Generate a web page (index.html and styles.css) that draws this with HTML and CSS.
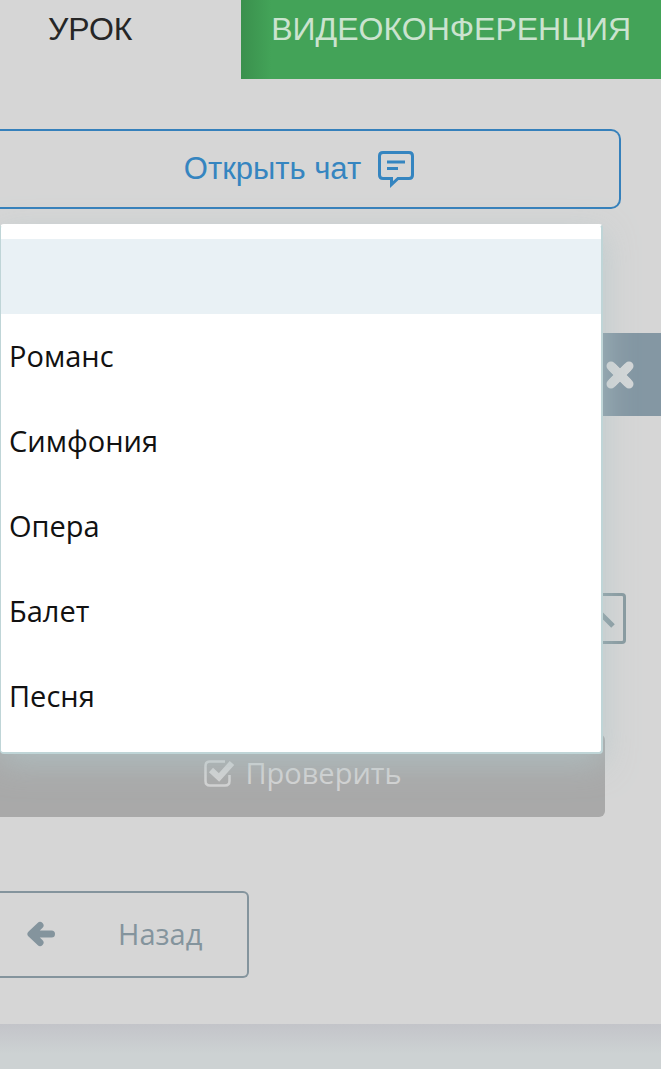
FILE: index.html
```html
<!DOCTYPE html>
<html lang="ru">
<head>
    <meta charset="UTF-8">
    <meta name="viewport" content="width=device-width, initial-scale=1.0">
    <title>Урок</title>
    <link rel="stylesheet" href="styles.css">
</head>
<body>
    <main class="page">
        <nav class="tabs">
            <a class="tab active" href="#lesson">УРОК</a>
            <a class="tab video" href="#video">ВИДЕОКОНФЕРЕНЦИЯ</a>
        </nav>

        <button class="chat" type="button">
            Открыть чат
            <svg width="38" height="38" viewBox="0 0 38 38" fill="none" stroke="currentColor" stroke-width="3">
                <path d="M6 2.500h26q3.500 0 3.500 3.500v19q0 3.500-3.500 3.500H21l-6.500 6v-6H6q-3.500 0-3.500-3.500V6q0-3.500 3.500-3.500z"/>
                <path d="M10 12h18M10 18.500h11"/>
            </svg>
        </button>

        <section class="task">
            <div class="bar">
                <button class="close" type="button" aria-label="Закрыть">
                    <svg width="32" height="32" viewBox="0 0 32 32" stroke="currentColor" stroke-width="9" stroke-linecap="square">
                        <path d="M8 8l16 16M24 8L8 24" stroke-linecap="butt"/>
                        <path d="M7 7l18 18M25 7L7 25" stroke-linecap="round"/>
                    </svg>
                </button>
            </div>

            <div class="field">
                <select class="answer" id="answer" aria-label="Ответ">
                    <option selected></option>
                    <option>Романс</option>
                    <option>Симфония</option>
                    <option>Опера</option>
                    <option>Балет</option>
                    <option>Песня</option>
                </select>
                <svg class="arrow" width="30" height="22" viewBox="0 0 30 22" fill="none" stroke="currentColor" stroke-width="5">
                    <path d="M2 18L15 5l13 13"/>
                </svg>
            </div>

            <button class="check" type="button">
                <svg width="32" height="30" viewBox="0 0 32 30" fill="none" stroke="currentColor">
                    <path d="M22 3.500H7Q2.500 3.500 2.500 8v15q0 4.500 4.500 4.500h15q4.500 0 4.500-4.500v-6" stroke-width="2.500"/>
                    <path d="M8 12l8 7.500L29 5" stroke-width="6"/>
                </svg>
                Проверить
            </button>

            <ul class="menu" id="menu">
                <li><button class="option selected" type="button" aria-label="Пусто"></button></li>
                <li><button class="option" type="button">Романс</button></li>
                <li><button class="option" type="button">Симфония</button></li>
                <li><button class="option" type="button">Опера</button></li>
                <li><button class="option" type="button">Балет</button></li>
                <li><button class="option" type="button">Песня</button></li>
            </ul>
        </section>

        <a class="back" href="#back">
            <svg width="30" height="26" viewBox="0 0 30 26" fill="none" stroke="currentColor" stroke-width="7" stroke-linecap="round" stroke-linejoin="round">
                <path d="M14 4.500L5 13l9 8.500M6 13h19.500"/>
            </svg>
            Назад
        </a>
    </main>
    <footer class="footer"></footer>

    <script>
        const answer = document.getElementById('answer');
        const options = document.querySelectorAll('.option');

        options.forEach((option, index) => {
            option.addEventListener('click', () => {
                answer.selectedIndex = index;
                document.getElementById('menu').hidden = true;
            });
        });
    </script>
</body>
</html>
```
FILE: styles.css
```css
* {
    box-sizing: border-box;
}
body {
    margin: 0;
    min-height: 100vh;
    display: flex;
    flex-direction: column;
    background-color: #cdd2d3;
    font-family: "Open Sans", sans-serif;
    font-size: 29px;
}
button, select {
    font: inherit;
    cursor: pointer;
}
svg {
    display: block;
    flex: none;
}
.page {
    background-color: #d6d6d6;
    padding-bottom: 46px;
}
.tabs {
    display: flex;
    height: 79px;
    font-family: "Liberation Sans", Arial, sans-serif;
    font-size: 32px;
    line-height: 36px;
}
.tab {
    padding: 11px 30px;
    text-decoration: none;
    white-space: nowrap;
}
.tab.active {
    flex: 1;
    padding-left: 48px;
    color: #262626;
}
.tab.video {
    background: linear-gradient(to right, #3a904d, #43a358 30px);
    color: #cbe3cf;
}
.chat {
    display: flex;
    align-items: center;
    justify-content: center;
    gap: 16px;
    width: calc(100% - 40px);
    height: 80px;
    margin-top: 50px;
    padding: 0 20px 0 0;
    border: 2px solid #3580bb;
    border-left: 0;
    border-radius: 0 10px 10px 0;
    background: none;
    color: #3585c0;
    font-family: "Liberation Sans", Arial, sans-serif;
    font-size: 31px;
}
.task {
    position: relative;
    margin-top: 15px;
    padding-top: 109px;
}
.bar {
    display: flex;
    align-items: center;
    justify-content: flex-end;
    height: 83px;
    padding-right: 25px;
    background-color: #8497a3;
}
.close {
    padding: 0;
    border: 0;
    background: none;
    color: #d3d6d7;
}
.field {
    display: grid;
    align-items: center;
    margin: 177px 35px 90px 0;
    color: #87999f;
}
.answer {
    grid-area: 1 / 1;
    width: 100%;
    height: 51px;
    border: 3px solid #87999f;
    border-left: 0;
    border-radius: 4px;
    background: none;
    appearance: none;
}
.arrow {
    grid-area: 1 / 1;
    justify-self: end;
    margin-right: 11px;
    pointer-events: none;
}
.check {
    display: flex;
    align-items: center;
    justify-content: center;
    gap: 10px;
    width: calc(100% - 56px);
    height: 83px;
    padding: 0 0 6px;
    border: 0;
    border-radius: 0 6px 6px 0;
    background-color: #a9a9a9;
    color: #d3d3d3;
}
.menu {
    position: absolute;
    top: 0;
    left: 0;
    right: 58px;
    margin: 0;
    padding: 13px 0;
    list-style: none;
    background-color: #fff;
    border: 2px solid #bfd5d7;
    border-top-color: #fff;
    border-left-width: 1px;
    border-radius: 4px;
    box-shadow: 0 10px 32px rgba(176, 196, 199, 0.7);
}
.option {
    display: block;
    width: 100%;
    height: 85px;
    padding: 0 8px 2px;
    border: 0;
    background: none;
    color: #111;
    text-align: left;
}
.option.selected {
    height: 75px;
    background-color: #e9f1f5;
}
.back {
    display: flex;
    align-items: center;
    gap: 62px;
    width: 249px;
    height: 87px;
    margin-top: 74px;
    padding: 0 0 2px 26px;
    border: 2px solid #84949d;
    border-left: 0;
    border-radius: 0 6px 6px 0;
    color: #84949d;
    text-decoration: none;
}
.footer {
    flex: 1;
    min-height: 45px;
    background: linear-gradient(#c3c4c9, #cdd2d3 30px);
}
```
